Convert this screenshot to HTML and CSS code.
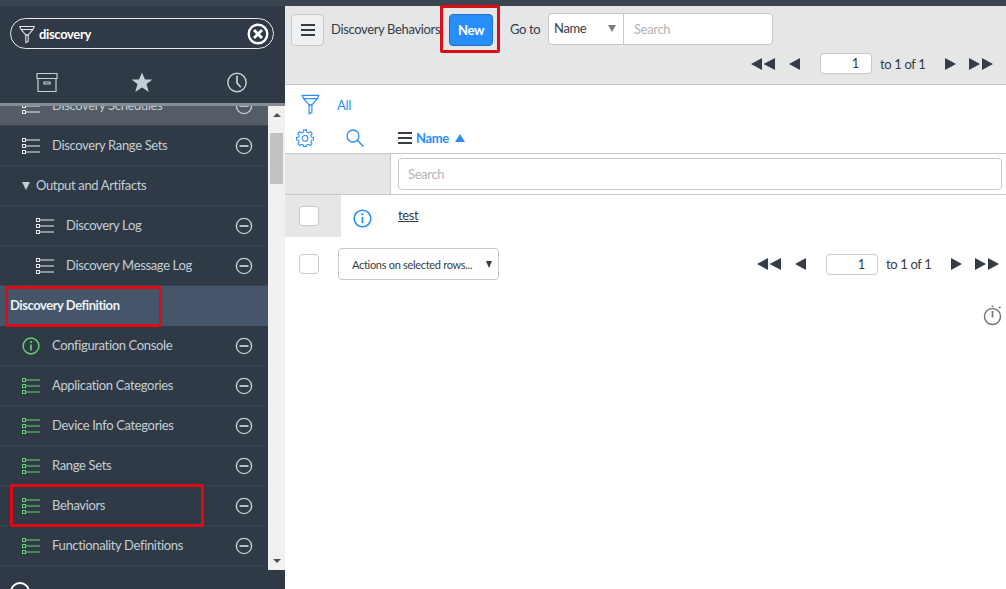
FILE: index.html
```html
<!DOCTYPE html>
<html lang="en">
<head>
  <meta charset="UTF-8">
  <title>Discovery Behaviors</title>
  <link rel="stylesheet" href="styles.css">
</head>

<body>
  <svg class="defs" width="0" height="0">
    <symbol id="i-list" viewBox="0 0 18 16">
      <rect x="0.5" y="0.5" width="3" height="3" fill="none" stroke="currentColor"/>
      <rect x="0.5" y="6.5" width="3" height="3" fill="none" stroke="currentColor"/>
      <rect x="0.5" y="12.5" width="3" height="3" fill="none" stroke="currentColor"/>
      <path d="M4 2H18M4 8H18M4 14H18" stroke="currentColor" stroke-width="1.2" fill="none"/>
    </symbol>
    <symbol id="i-minus" viewBox="0 0 18 18">
      <circle cx="9" cy="9" r="7.6" fill="none" stroke="currentColor" stroke-width="1.4"/>
      <path d="M4.5 9H13.5" stroke="currentColor" stroke-width="1.8"/>
    </symbol>
    <symbol id="i-funnel" viewBox="0 0 20 24">
      <path d="M1 1.5H19L17.5 5L11.5 12H8.5L2.5 5Z M2.5 5H17.5" fill="none" stroke="currentColor" stroke-width="1.3"/>
      <path d="M8.5 12V21.5L11.5 20V12Z" fill="none" stroke="currentColor" stroke-width="1.3"/>
    </symbol>
    <symbol id="i-info" viewBox="0 0 20 20">
      <circle cx="10" cy="10" r="8.8" fill="none" stroke="currentColor" stroke-width="1.6"/>
      <circle cx="10" cy="5.6" r="1.2" fill="currentColor"/>
      <path d="M10 8.4V15" stroke="currentColor" stroke-width="1.8"/>
    </symbol>
    <symbol id="i-first" viewBox="0 0 25 12">
      <path d="M0 6L11 0V12ZM12.500 6L24 0V12Z" fill="currentColor"/>
    </symbol>
    <symbol id="i-prev" viewBox="0 0 12 12">
      <path d="M0 6L11 0V12Z" fill="currentColor"/>
    </symbol>
    <symbol id="i-next" viewBox="0 0 12 12">
      <path d="M11 6L0 0V12Z" fill="currentColor"/>
    </symbol>
    <symbol id="i-last" viewBox="0 0 25 12">
      <path d="M11 6L0 0V12ZM24 6L13 0V12Z" fill="currentColor"/>
    </symbol>
  </svg>

  <div class="topline"></div>

  <div class="app">
    <!-- Menu lateral -->
    <aside class="sidebar">
      <div class="filtro">
        <svg class="filtro-icon"><use href="#i-funnel"/></svg>
        <span class="filtro-text">discovery</span>
        <svg class="filtro-clear" viewBox="0 0 22 22">
          <circle cx="11" cy="11" r="9.300" fill="none" stroke="currentColor" stroke-width="2.4"/>
          <path d="M7 7L15 15M15 7L7 15" stroke="currentColor" stroke-width="2.800"/>
        </svg>
      </div>

      <div class="tabs">
        <svg class="tab-icon" viewBox="0 0 22 20">
          <path d="M1 1H21V6H1ZM2 6V19H20V6M8 9.500H14V11.500H8Z" fill="none" stroke="currentColor" stroke-width="1.200"/>
        </svg>
        <svg class="tab-icon" viewBox="0 0 22 20">
          <path d="M11 0L14 7H21.500L15.500 11.600L17.800 19.500L11 15L4.200 19.500L6.500 11.600L0.500 7H8Z" fill="currentColor"/>
        </svg>
        <svg class="tab-icon" viewBox="0 0 22 22">
          <circle cx="11" cy="11" r="9.600" fill="none" stroke="currentColor" stroke-width="1.500"/>
          <path d="M11 4V11.500L15 16" fill="none" stroke="currentColor" stroke-width="1.800"/>
        </svg>
      </div>

      <div class="menu">
        <div class="menu-scroll">
          <ul class="lista">
            <li class="item item-activo"><svg class="ico"><use href="#i-list"/></svg><span>Discovery Schedules</span><svg class="quitar"><use href="#i-minus"/></svg></li>
            <li class="item"><svg class="ico"><use href="#i-list"/></svg><span>Discovery Range Sets</span><svg class="quitar"><use href="#i-minus"/></svg></li>
            <li class="item sub"><span class="flecha"></span><span>Output and Artifacts</span></li>
            <li class="item nivel2"><svg class="ico"><use href="#i-list"/></svg><span>Discovery Log</span><svg class="quitar"><use href="#i-minus"/></svg></li>
            <li class="item nivel2"><svg class="ico"><use href="#i-list"/></svg><span>Discovery Message Log</span><svg class="quitar"><use href="#i-minus"/></svg></li>
            <li class="grupo">Discovery Definition</li>
            <li class="item verde"><svg class="ico ico-info"><use href="#i-info"/></svg><span>Configuration Console</span><svg class="quitar"><use href="#i-minus"/></svg></li>
            <li class="item verde"><svg class="ico"><use href="#i-list"/></svg><span>Application Categories</span><svg class="quitar"><use href="#i-minus"/></svg></li>
            <li class="item verde"><svg class="ico"><use href="#i-list"/></svg><span>Device Info Categories</span><svg class="quitar"><use href="#i-minus"/></svg></li>
            <li class="item verde"><svg class="ico"><use href="#i-list"/></svg><span>Range Sets</span><svg class="quitar"><use href="#i-minus"/></svg></li>
            <li class="item verde"><svg class="ico"><use href="#i-list"/></svg><span>Behaviors</span><svg class="quitar"><use href="#i-minus"/></svg></li>
            <li class="item verde"><svg class="ico"><use href="#i-list"/></svg><span>Functionality Definitions</span><svg class="quitar"><use href="#i-minus"/></svg></li>
          </ul>
        </div>
        <div class="scrollbar">
          <span class="sb-up"></span>
          <div class="sb-track"><div class="sb-thumb"></div></div>
          <span class="sb-down"></span>
        </div>
      </div>

      <div class="sidebar-pie"><span class="pie-circulo"></span></div>
    </aside>

    <!-- Contenido -->
    <main class="contenido">
      <header class="cabecera">
        <div class="cabecera-fila">
          <button class="btn-menu"><span class="barras"></span></button>
          <span class="titulo">Discovery Behaviors</span>
          <button class="btn-new">New</button>
          <span class="goto">Go to</span>
          <div class="select-name"><span>Name</span><span class="flecha-gris"></span></div>
          <div class="buscar">Search</div>
        </div>
        <div class="paginador paginador-top">
          <svg class="pg pg-doble"><use href="#i-first"/></svg>
          <svg class="pg pg-simple"><use href="#i-prev"/></svg>
          <div class="pg-input">1</div>
          <span class="pg-text">to 1 of 1</span>
          <svg class="pg pg-simple pg-next"><use href="#i-next"/></svg>
          <svg class="pg pg-doble"><use href="#i-last"/></svg>
        </div>
      </header>

      <div class="filtro-lista">
        <svg class="funnel-azul"><use href="#i-funnel"/></svg>
        <span class="todos">All</span>
      </div>

      <div class="columnas">
        <svg class="gear" viewBox="0 0 20 20">
          <path d="M8.500 1H11.500L12 3.500L14 4.300L16.200 3L18 5.200L16.500 7.200L17.200 9L19.500 9.500V12L17.200 12.600L16.500 14.500L17.800 16.500L15.800 18.400L13.800 17L12 17.700L11.500 19.500H8.500L8 17.700L6.200 17L4.200 18.400L2.200 16.500L3.500 14.500L2.800 12.600L0.500 12V9.500L2.800 9L3.500 7.200L2 5.200L3.800 3L6 4.300L8 3.500Z" fill="none" stroke="currentColor" stroke-width="1.200"/>
          <circle cx="10" cy="10.500" r="3.200" fill="none" stroke="currentColor" stroke-width="1.200"/>
        </svg>
        <svg class="lupa" viewBox="0 0 18 18">
          <circle cx="7" cy="7" r="6" fill="none" stroke="currentColor" stroke-width="1.300"/>
          <path d="M11.300 11.300L17.500 17.500" stroke="currentColor" stroke-width="1.500"/>
        </svg>
        <span class="barras barras-col"></span>
        <span class="col-name">Name</span>
        <span class="flecha-azul"></span>
      </div>

      <div class="fila-busqueda">
        <div class="busqueda-gris"></div>
        <div class="busqueda-celda"><div class="busqueda-input">Search</div></div>
      </div>

      <div class="fila-dato">
        <div class="celda-check"><span class="check"></span></div>
        <svg class="info-azul"><use href="#i-info"/></svg>
        <a class="enlace" href="#">test</a>
      </div>

      <div class="pie-lista">
        <span class="check"></span>
        <div class="acciones"><span>Actions on selected rows...</span><span class="flecha-negra"></span></div>
        <div class="paginador paginador-pie">
          <svg class="pg pg-doble"><use href="#i-first"/></svg>
          <svg class="pg pg-simple"><use href="#i-prev"/></svg>
          <div class="pg-input">1</div>
          <span class="pg-text">to 1 of 1</span>
          <svg class="pg pg-simple pg-next"><use href="#i-next"/></svg>
          <svg class="pg pg-doble"><use href="#i-last"/></svg>
        </div>
      </div>

      <div class="tiempo">
        <svg class="reloj" viewBox="0 0 20 22">
          <circle cx="9.500" cy="12.500" r="8" fill="none" stroke="currentColor" stroke-width="1.500"/>
          <path d="M9.500 1.500V3M9.500 7V13.500M16 4L17.500 2.800" stroke="currentColor" stroke-width="1.700" fill="none"/>
        </svg>
      </div>
    </main>
  </div>

  <!-- Recuadros rojos de la captura -->
  <div class="marca marca-grupo"></div>
  <div class="marca marca-behaviors"></div>
  <div class="marca marca-new"></div>
</body>
</html>
```

FILE: styles.css
```css
* {
  box-sizing: border-box;
}

html, body {
  height: 100%;
}

body {
  margin: 0;
  font-family: Lato, "Noto Sans", Arial, sans-serif;
  font-size: 13px;
  letter-spacing: -0.35px;
  color: #343d47;
  background-color: white;
  overflow: hidden;
  position: relative;
}

.defs {
  position: absolute;
}

.topline {
  height: 6px;
  background-color: #3b4552;
}

.app {
  display: flex;
  height: 583px;
}

/* Menu lateral */
.sidebar {
  width: 285px;
  flex-shrink: 0;
  background-color: #303a46;
  display: flex;
  flex-direction: column;
}

.filtro {
  display: flex;
  align-items: center;
  height: 31px;
  margin: 12px 11px 0 10px;
  padding: 0 4px 0 8px;
  border: 1px solid #e6eaee;
  border-radius: 16px;
  color: white;
}

.filtro-icon {
  width: 16px;
  height: 24px;
  color: #e6eaee;
  margin-top: 2px;
}

.filtro-text {
  margin-left: 4px;
  font-weight: 700;
  flex: 1;
}

.filtro-clear {
  width: 22px;
  height: 22px;
}

.tabs {
  display: flex;
  justify-content: space-between;
  padding: 12px 37px 0 36px;
  align-items: center;
  height: 54px;
  color: #c4ced6;
}

.tab-icon {
  width: 22px;
  height: 21px;
}

.menu {
  flex: 1;
  display: flex;
  min-height: 0;
  border-top: 3px solid #868d94;
}

.menu-scroll {
  flex: 1;
  overflow: hidden;
}

.lista {
  list-style: none;
  margin: -20px 0 0;
  padding: 0;
}

.item {
  display: flex;
  align-items: center;
  height: 40px;
  padding: 0 15px 0 22px;
  color: #c4ced6;
  border-bottom: 1px solid #3a4450;
}

.item span:not(.flecha) {
  flex: 1;
  margin-top: -1px;
}

.item-activo {
  background-color: #545d66;
}

.sub {
  padding-left: 22px;
}

.sub span:last-child {
  margin-left: 6px;
}

.nivel2 {
  padding-left: 36px;
}

.flecha {
  width: 0;
  height: 0;
  border-left: 4.500px solid transparent;
  border-right: 4.500px solid transparent;
  border-top: 8px solid #c4ced6;
}

.ico {
  width: 18px;
  height: 16px;
  margin-right: 12px;
  color: #e6eaee;
}

.verde .ico {
  color: #62d46a;
}

.ico-info {
  height: 18px;
}

.quitar {
  width: 18px;
  height: 18px;
  color: #c4ced6;
}

.grupo {
  height: 40px;
  line-height: 38px;
  padding-left: 10px;
  background-color: #45566a;
  color: #eef1f4;
  font-weight: 700;
  letter-spacing: -0.45px;
}

.scrollbar {
  width: 17px;
  background-color: #f1f1f1;
  display: flex;
  flex-direction: column;
  align-items: center;
}

.sb-up, .sb-down {
  width: 0;
  height: 0;
  border-left: 4px solid transparent;
  border-right: 4px solid transparent;
}

.sb-up {
  margin-top: 7px;
  border-bottom: 4px solid #505050;
}

.sb-down {
  margin-bottom: 7px;
  border-top: 4px solid #505050;
}

.sb-track {
  flex: 1;
  width: 100%;
  padding-top: 16px;
  display: flex;
  justify-content: center;
}

.sb-thumb {
  width: 13px;
  height: 51px;
  background-color: #c1c1c1;
}

.sidebar-pie {
  height: 19px;
  overflow: hidden;
  padding: 12px 0 0 10px;
}

.pie-circulo {
  display: block;
  width: 20px;
  height: 20px;
  border: 2px solid white;
  border-radius: 50%;
}

/* Contenido */
.contenido {
  flex: 1;
  min-width: 0;
}

.cabecera {
  height: 79px;
  background-color: #e4e6e8;
  border-bottom: 1px solid #c8c8c8;
  padding: 7px 4px 0 6px;
}

.cabecera-fila {
  display: flex;
  align-items: flex-start;
}

.btn-menu {
  width: 33px;
  height: 32px;
  margin-top: 1px;
  padding: 0;
  background-color: #eef0f2;
  border: 1px solid #c8c8c8;
  border-radius: 4px;
  display: flex;
  align-items: center;
  justify-content: center;
}

.barras {
  display: block;
  width: 14px;
  height: 12px;
  border-top: 2px solid #343d47;
  border-bottom: 2px solid #343d47;
}

.barras::after {
  content: "";
  display: block;
  height: 2px;
  margin-top: 3px;
  background-color: #343d47;
}

.titulo {
  margin-left: 7px;
  width: 118px;
  line-height: 31px;
  margin-top: 1px;
  white-space: nowrap;
}

.btn-new {
  width: 44px;
  height: 32px;
  margin-top: 1px;
  padding: 0;
  background-color: #278efc;
  border: 1px solid #1f6fc5;
  border-radius: 4px;
  color: white;
  font-family: inherit;
  font-size: 13px;
  font-weight: 700;
  letter-spacing: -0.35px;
}

.goto {
  margin-left: 17px;
  width: 38px;
  line-height: 31px;
  margin-top: 1px;
}

.select-name {
  width: 76px;
  height: 32px;
  display: flex;
  align-items: center;
  justify-content: space-between;
  padding: 0 7px 2px 5px;
  background-color: white;
  border: 1px solid #c8c8c8;
  border-radius: 4px 0 0 4px;
}

.flecha-gris {
  width: 0;
  height: 0;
  border-left: 4px solid transparent;
  border-right: 4px solid transparent;
  border-top: 7px solid #767c84;
}

.buscar {
  width: 150px;
  height: 32px;
  margin-left: -1px;
  line-height: 30px;
  padding-left: 10px;
  background-color: white;
  border: 1px solid #c8c8c8;
  border-radius: 0 4px 4px 0;
  color: #b4b4b4;
}

.paginador {
  display: flex;
  align-items: center;
  justify-content: flex-end;
  color: #343d47;
}

.paginador-top {
  margin-top: 7px;
  padding-right: 8px;
}

.paginador-pie {
  margin-left: auto;
  padding-right: 6px;
}

.pg {
  height: 12px;
}

.pg-doble {
  width: 25px;
}

.pg-simple {
  width: 12px;
  margin-left: 13px;
}

.pg-next {
  margin: 0 12px 0 0;
}

.pg-input {
  width: 52px;
  height: 21px;
  margin-left: 19px;
  padding-right: 12px;
  line-height: 19px;
  text-align: right;
  background-color: white;
  border: 1px solid #c8c8c8;
  border-radius: 4px;
}

.pg-text {
  width: 45px;
  margin: 0 20px 0 8px;
  white-space: nowrap;
}

.filtro-lista {
  display: flex;
  align-items: center;
  height: 40px;
  padding: 0 0 0 16px;
}

.funnel-azul {
  width: 19px;
  height: 22px;
  color: #278efc;
}

.todos {
  margin-left: 17px;
  color: #278efc;
}

.columnas {
  display: flex;
  align-items: center;
  height: 29px;
  padding: 0 0 2px 11px;
  border-bottom: 1px solid #c8c8c8;
  color: #278efc;
}

.gear {
  width: 18px;
  height: 18px;
}

.lupa {
  width: 18px;
  height: 18px;
  margin-left: 32px;
}

.barras-col {
  margin-left: 34px;
}

.col-name {
  margin-left: 4px;
  font-weight: 700;
}

.flecha-azul {
  width: 0;
  height: 0;
  margin-left: 6px;
  border-left: 5px solid transparent;
  border-right: 5px solid transparent;
  border-bottom: 8px solid #278efc;
}

.fila-busqueda {
  display: flex;
  height: 41px;
  border-bottom: 1px solid #c8c8c8;
}

.busqueda-gris {
  width: 106px;
  background-color: #e4e6e8;
  border-right: 1px solid #c8c8c8;
}

.busqueda-celda {
  flex: 1;
  padding: 4px 4px 0 7px;
}

.busqueda-input {
  height: 32px;
  line-height: 31px;
  padding-left: 9px;
  border: 1px solid #c8c8c8;
  border-radius: 4px;
  color: #b4b4b4;
}

.fila-dato {
  display: flex;
  align-items: center;
  height: 42px;
}

.celda-check {
  width: 56px;
  height: 42px;
  background-color: #e4e6e8;
  display: flex;
  align-items: center;
  padding-left: 14px;
  margin-right: 12px;
}

.check {
  display: block;
  flex-shrink: 0;
  width: 20px;
  height: 20px;
  background-color: white;
  border: 1px solid #c8c8c8;
  border-radius: 4px;
}

.info-azul {
  width: 19px;
  height: 19px;
  margin-top: 4px;
  color: #278efc;
}

.enlace {
  margin-left: 26px;
  margin-top: -2px;
  color: #343d47;
}

.pie-lista {
  display: flex;
  align-items: center;
  height: 32px;
  margin-top: 11px;
  padding-left: 14px;
}

.acciones {
  width: 161px;
  height: 32px;
  margin-left: 19px;
  display: flex;
  align-items: center;
  justify-content: space-between;
  padding: 0 6px 0 13px;
  border: 1px solid #c8c8c8;
  border-radius: 4px;
  font-size: 11px;
  letter-spacing: -0.3px;
  white-space: nowrap;
}

.flecha-negra {
  width: 0;
  height: 0;
  border-left: 3.500px solid transparent;
  border-right: 3.500px solid transparent;
  border-top: 7px solid #343d47;
}

.tiempo {
  display: flex;
  justify-content: flex-end;
  padding: 24px 3px 0 0;
}

.reloj {
  width: 20px;
  height: 22px;
  color: #767676;
}

/* Recuadros rojos */
.marca {
  position: absolute;
  border: 3px solid #e00a14;
  border-radius: 2px;
}

.marca-grupo {
  left: 5px;
  top: 286px;
  width: 157px;
  height: 41px;
}

.marca-behaviors {
  left: 10px;
  top: 484px;
  width: 194px;
  height: 43px;
}

.marca-new {
  left: 440px;
  top: 5px;
  width: 60px;
  height: 48px;
}
```
